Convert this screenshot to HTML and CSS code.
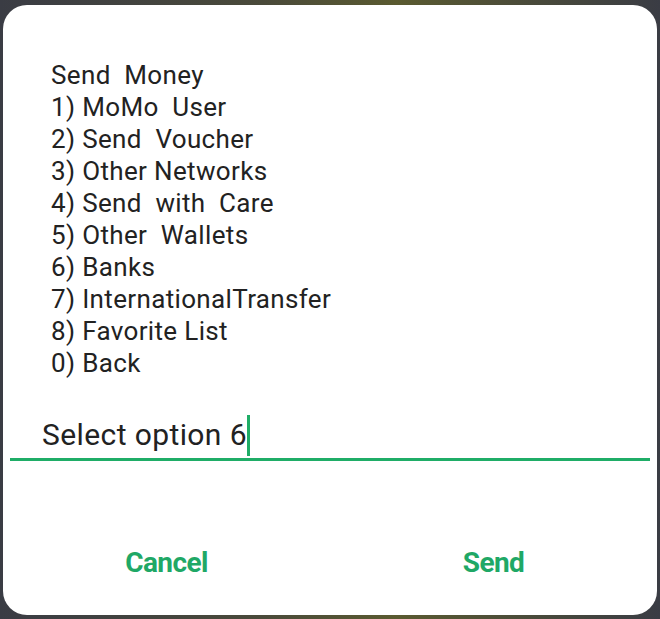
FILE: index.html
```html
<!DOCTYPE html>
<html>
<head>
<meta charset="utf-8">
<link rel="stylesheet" href="styles.css">
</head>
<body>
<div class="screen">
  <div class="dialog">
    <div class="menu">
      <div class="line">Send  Money</div>
      <div class="line">1) MoMo  User</div>
      <div class="line">2) Send  Voucher</div>
      <div class="line">3) Other Networks</div>
      <div class="line">4) Send  with  Care</div>
      <div class="line">5) Other  Wallets</div>
      <div class="line">6) Banks</div>
      <div class="line">7) InternationalTransfer</div>
      <div class="line">8) Favorite List</div>
      <div class="line">0) Back</div>
    </div>
    <div class="field">
      <span class="value">Select option 6</span><span class="caret"></span>
    </div>
    <div class="actions">
      <div class="btn">Cancel</div>
      <div class="btn">Send</div>
    </div>
  </div>
</div>
</body>
</html>
```

FILE: styles.css
```css
html, body {
  margin: 0;
  padding: 0;
}
body {
  width: 660px;
  height: 619px;
  overflow: hidden;
  background: #383a42;
  font-family: Roboto, "Noto Sans", sans-serif;
}
.screen {
  padding: 5px 3px 4px 3px;
  background: linear-gradient(90deg, #3a3c44 0%, #4a4a3a 40%, #5a5a30 60%, #3a3c44 100%);
  height: 610px;
}
.dialog {
  height: 610px;
  background: #ffffff;
  border-radius: 24px;
  display: flex;
  flex-direction: column;
  box-sizing: border-box;
  padding-top: 54px;
}
.menu {
  padding-left: 48px;
  color: #222222;
  font-size: 26px;
  line-height: 32px;
  letter-spacing: 0.35px;
}
.line {
  white-space: pre;
}
.field {
  margin: 36px 7px 0 7px;
  padding: 0 0 3px 32px;
  border-bottom: 3px solid #1fad67;
  height: 40px;
  display: flex;
  align-items: center;
  font-size: 30px;
  line-height: 40px;
  letter-spacing: 0.4px;
  color: #222222;
}
.caret {
  display: inline-block;
  width: 3px;
  height: 41px;
  background: #1fad67;
  margin-left: 0;
}
.actions {
  display: flex;
  margin-top: 85px;
}
.btn {
  flex: 1;
  text-align: center;
  color: #1fa866;
  font-weight: 700;
  font-size: 28px;
  line-height: 34px;
  letter-spacing: -0.6px;
}
```
